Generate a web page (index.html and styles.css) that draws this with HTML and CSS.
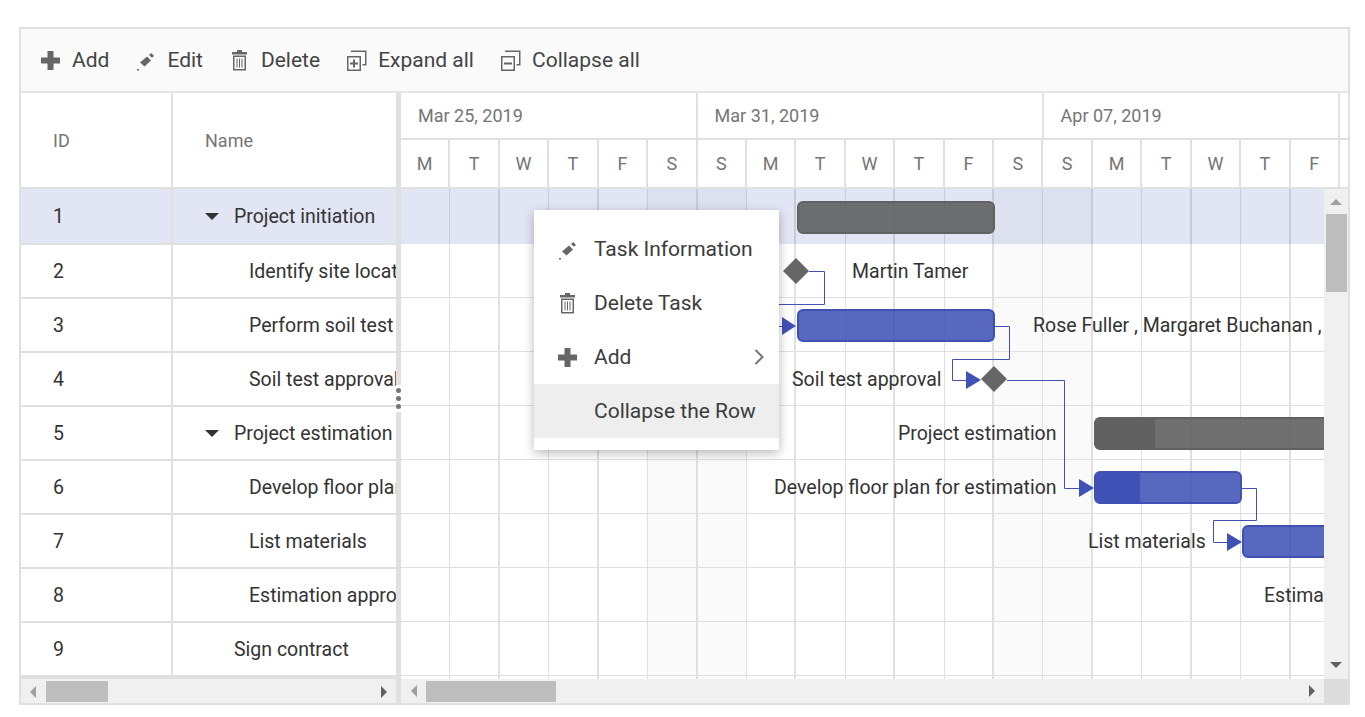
FILE: index.html
```html
<!DOCTYPE html>
<html>
  <head>
    <title>Project Gantt</title>
    <link rel="stylesheet" href="styles.css">
  </head>
  <body>
    <svg class="defs" xmlns="http://www.w3.org/2000/svg">
      <symbol id="ico-add" viewBox="0 0 21 21">
        <path d="M7.5 1h6v6.5H20v6h-6.500v6.500h-6v-6.500H1v-6h6.500z"/>
      </symbol>
      <symbol id="ico-edit" viewBox="0 0 21 21">
        <path d="M5 12.500 12 6.500l4 4-6.500 6zM14 5l2.200-2 2.800 3-2 1.800zM2 19h2v1.500H2z"/>
      </symbol>
      <symbol id="ico-delete" viewBox="0 0 21 21">
        <path d="M8 0h5v2h5v2.500H3V2h5z"/>
        <path d="M4 5.500h13V20.500H4zM5.500 7v12h10V7z" fill-rule="evenodd"/>
        <path d="M7.500 8.500h1V17.500h-1zM10 8.500h1V17.500h-1zM12.500 8.500h1V17.500h-1z"/>
      </symbol>
      <symbol id="ico-expand" viewBox="0 0 21 21">
        <path d="M1 6h14v15H1zM2.500 7.500v12h11v-12z" fill-rule="evenodd"/>
        <path d="M5 2V.5h15.500V15.500H16.500V14h2.500V2z"/>
        <path d="M7 9.500h2v3h3v2H9v3H7v-3H4v-2h3z"/>
      </symbol>
      <symbol id="ico-collapse" viewBox="0 0 21 21">
        <path d="M1 6h14v15H1zM2.500 7.500v12h11v-12z" fill-rule="evenodd"/>
        <path d="M5 2V.5h15.500V15.500H16.500V14h2.500V2z"/>
        <path d="M4 12.500h8v2H4z"/>
      </symbol>
    </svg>

    <main class="gantt">
      <header class="toolbar">
        <span class="tool"><svg class="ico"><use href="#ico-add"/></svg>Add</span>
        <span class="tool"><svg class="ico"><use href="#ico-edit"/></svg>Edit</span>
        <span class="tool"><svg class="ico"><use href="#ico-delete"/></svg>Delete</span>
        <span class="tool"><svg class="ico"><use href="#ico-expand"/></svg>Expand all</span>
        <span class="tool"><svg class="ico"><use href="#ico-collapse"/></svg>Collapse all</span>
      </header>

      <div class="panes">
        <section class="left">
          <div class="grid-head">
            <div class="col-id">ID</div>
            <div class="col-name">Name</div>
          </div>
          <div class="grid-row selected">
            <div class="cell-id">1</div>
            <div class="cell-name parent"><i class="caret"></i>Project initiation</div>
          </div>
          <div class="grid-row">
            <div class="cell-id">2</div>
            <div class="cell-name child">Identify site location</div>
          </div>
          <div class="grid-row">
            <div class="cell-id">3</div>
            <div class="cell-name child">Perform soil test</div>
          </div>
          <div class="grid-row">
            <div class="cell-id">4</div>
            <div class="cell-name child">Soil test approval</div>
          </div>
          <div class="grid-row">
            <div class="cell-id">5</div>
            <div class="cell-name parent"><i class="caret"></i>Project estimation</div>
          </div>
          <div class="grid-row">
            <div class="cell-id">6</div>
            <div class="cell-name child">Develop floor plan for estimation</div>
          </div>
          <div class="grid-row">
            <div class="cell-id">7</div>
            <div class="cell-name child">List materials</div>
          </div>
          <div class="grid-row">
            <div class="cell-id">8</div>
            <div class="cell-name child">Estimation approval</div>
          </div>
          <div class="grid-row">
            <div class="cell-id">9</div>
            <div class="cell-name leaf">Sign contract</div>
          </div>
          <div class="hscroll hscroll-left">
            <i class="arrow-left"></i>
            <b class="thumb-left"></b>
            <i class="arrow-right"></i>
          </div>
        </section>

        <div class="splitter"></div>

        <section class="right">
          <div class="tl-head">
            <div class="tier-top">
              <div class="week w6">Mar 25, 2019</div>
              <div class="week w7">Mar 31, 2019</div>
              <div class="week w6">Apr 07, 2019</div>
            </div>
            <div class="tier-days">
              <div>M</div><div>T</div><div>W</div><div>T</div><div>F</div><div>S</div>
              <div>S</div><div>M</div><div>T</div><div>W</div><div>T</div><div>F</div><div>S</div>
              <div>S</div><div>M</div><div>T</div><div>W</div><div>T</div><div>F</div><div></div>
            </div>
          </div>

          <div class="tl-body">
            <div class="chart">
              <div class="days">
                <i></i><i></i><i></i><i></i><i></i><i class="off"></i>
                <i class="off"></i><i></i><i></i><i></i><i></i><i></i><i class="off"></i>
                <i class="off"></i><i></i><i></i><i></i><i></i><i></i>
              </div>
              <div class="chart-rows">
                <div class="chart-row selected"></div>
                <div class="chart-row"></div><div class="chart-row"></div><div class="chart-row"></div>
                <div class="chart-row"></div><div class="chart-row"></div><div class="chart-row"></div>
                <div class="chart-row"></div><div class="chart-row"></div>
              </div>

              <svg class="links" width="923" height="490">
                <path d="M408 82.500H423.500V115.500H368V137.500H381"/>
                <path d="M594 137.500H608.500V170.500H551.500V191.500H565"/>
                <path d="M606 191.500H663.500V299.500H678"/>
                <path d="M841 299.500H855.500V331.500H812.500V353.500H826"/>
                <polygon class="head" points="381,128 395,137 381,146"/>
                <polygon class="head" points="565,182 580,191 565,200"/>
                <polygon class="head" points="678,290 693,299 678,308"/>
                <polygon class="head" points="826,344 841,353 826,362"/>
                <polygon class="mile" points="395,69 408,82 395,95"/>
                <polygon class="mile" points="395,69 382,82 395,95"/>
                <polygon class="mile" points="593,177 606,190 593,203"/>
                <polygon class="mile" points="593,177 580,190 593,203"/>
              </svg>

              <div class="bar gray b1"></div>
              <div class="bar blue b3"></div>
              <div class="bar gray b5"><div class="prog p5"></div></div>
              <div class="bar blue b6"><div class="prog p6"></div></div>
              <div class="bar blue b7"></div>

              <span class="label l2">Martin Tamer</span>
              <span class="label l3">Rose Fuller , Margaret Buchanan , Van Jack</span>
              <span class="label l4">Soil test approval</span>
              <span class="label l5">Project estimation</span>
              <span class="label l6">Develop floor plan for estimation</span>
              <span class="label l7">List materials</span>
              <span class="label l8">Estimation approval</span>
            </div>
            <div class="vscroll">
              <i class="arrow-up"></i>
              <b class="thumb-v"></b>
              <i class="arrow-down"></i>
            </div>
          </div>

          <div class="tl-foot">
            <div class="hscroll hscroll-right">
              <i class="arrow-left"></i>
              <b class="thumb-right"></b>
              <i class="arrow-right"></i>
            </div>
            <div class="corner"></div>
          </div>
        </section>
      </div>

      <div class="resize-handle"><i></i><i></i><i></i></div>

      <ul class="menu">
        <li><svg class="ico"><use href="#ico-edit"/></svg>Task Information</li>
        <li><svg class="ico"><use href="#ico-delete"/></svg>Delete Task</li>
        <li><svg class="ico"><use href="#ico-add"/></svg>Add
          <svg class="chevron" width="11" height="16" viewBox="0 0 11 16"><path d="M1.500 1 8.500 8l-7 7"/></svg>
        </li>
        <li class="hover"><span class="ico"></span>Collapse the Row</li>
      </ul>
    </main>
  </body>
</html>
```

FILE: styles.css
```css
*
{
  box-sizing: border-box;
}

body
{
  margin: 27px 15px 0 19px;
  font-family: Roboto, "Liberation Sans", sans-serif;
  color: #333;
  background: #FFF;
}

.defs
{
  display: none;
}

.gantt
{
  position: relative;
  width: 1331px;
  height: 678px;
  border: 2px solid #E0E0E0;
  overflow: hidden;
}

/* toolbar */

.toolbar
{
  display: flex;
  align-items: center;
  gap: 26px;
  height: 64px;
  padding-left: 19px;
  background: #FAFAFA;
  border-bottom: 2px solid #E6E6E6;
  font-size: 21px;
  color: #444;
}

.tool
{
  display: flex;
  align-items: center;
  gap: 11px;
}

.ico
{
  display: block;
  flex: none;
  width: 21px;
  height: 21px;
  fill: #666;
}

/* left grid */

.panes
{
  display: flex;
  height: 610px;
}

.left
{
  width: 375px;
  flex: none;
}

.splitter
{
  width: 5px;
  flex: none;
  background: #E0E0E0;
}

.grid-head
{
  display: grid;
  grid-template-columns: 152px 1fr;
  height: 96px;
  border-bottom: 2px solid #E0E0E0;
  font-size: 18px;
  color: #757575;
}

.col-id
{
  display: flex;
  align-items: center;
  padding-left: 32px;
  border-right: 2px solid #E0E0E0;
}

.col-name
{
  display: flex;
  align-items: center;
  padding-left: 32px;
}

.grid-row
{
  display: grid;
  grid-template-columns: 152px 1fr;
  height: 54px;
  border-bottom: 2px solid #E0E0E0;
  font-size: 19.500px;
}

.grid-row.selected
{
  height: 56px;
  background: rgba(63, 81, 181, .15);
}

.cell-id
{
  display: flex;
  align-items: center;
  padding-left: 32px;
  border-right: 2px solid #E0E0E0;
}

.cell-name
{
  display: flex;
  align-items: center;
  white-space: nowrap;
  overflow: hidden;
}

.parent { padding-left: 32px; }
.child  { padding-left: 76px; }
.leaf   { padding-left: 61px; }

.caret
{
  width: 0;
  height: 0;
  margin-right: 15px;
  border-left: 7px solid transparent;
  border-right: 7px solid transparent;
  border-top: 7px solid #333;
}

/* timeline header */

.right
{
  flex: 1;
  min-width: 0;
}

.tl-head
{
  height: 96px;
  overflow: hidden;
  color: #757575;
  font-size: 18px;
  border-bottom: 2px solid #E0E0E0;
}

.tier-top
{
  display: flex;
  height: 47px;
  border-bottom: 2px solid #E0E0E0;
}

.week
{
  flex: none;
  display: flex;
  align-items: center;
  padding-left: 17px;
  border-right: 2px solid #E0E0E0;
}

.w6 { width: 296.600px; }
.w7 { width: 346px; }

.tier-days
{
  display: grid;
  grid-template-columns: repeat(20, 49.430px);
  height: 47px;
}

.tier-days div
{
  display: flex;
  align-items: center;
  justify-content: center;
  border-right: 2px solid #E0E0E0;
}

/* chart */

.tl-body
{
  display: flex;
  height: 490px;
}

.chart
{
  position: relative;
  width: 923px;
  flex: none;
  overflow: hidden;
}

.days
{
  position: absolute;
  inset: 0;
  display: grid;
  grid-template-columns: repeat(19, 49.430px);
}

.days i
{
  border-right: 1px solid #E0E0E0;
}

.days i:nth-child(even)
{
  border-right-width: 2px;
}

.days .off
{
  background: #FAFAFA;
}

.chart-rows
{
  position: relative;
}

.chart-row
{
  height: 54px;
  border-bottom: 1px solid #E0E0E0;
}

.chart-row.selected
{
  height: 55px;
  border-bottom: 0;
  background: rgba(63, 81, 181, .15);
}

.links
{
  position: absolute;
  left: 0;
  top: 0;
  fill: none;
  stroke: #3F51B5;
}

.links .head
{
  fill: #3F51B5;
  stroke: none;
}

.links .mile
{
  fill: #666;
  stroke: none;
}

.bar
{
  position: absolute;
  height: 33px;
  border-radius: 6px;
  border: 2px solid;
  overflow: hidden;
}

.gray
{
  background: rgba(97, 97, 97, .9);
  border-color: #616161;
}

.blue
{
  background: rgba(63, 81, 181, .87);
  border-color: #3F51B5;
}

.prog
{
  height: 100%;
}

.gray .prog { background: #616161; }
.blue .prog { background: #3F51B5; }

.b1 { left: 396px; top: 12px;  width: 198px; }
.b3 { left: 396px; top: 120px; width: 198px; }
.b5 { left: 693px; top: 228px; width: 300px; }
.b6 { left: 693px; top: 282px; width: 148px; }
.b7 { left: 841px; top: 336px; width: 200px; }

.p5 { width: 59px; }
.p6 { width: 44px; }

.label
{
  position: absolute;
  font-size: 19.500px;
  line-height: 26px;
  white-space: nowrap;
}

.l2 { left: 451px; top: 70px; }
.l3 { left: 632px; top: 124px; }
.l4 { left: 391px; top: 178px; }
.l5 { left: 497px; top: 232px; }
.l6 { left: 373px; top: 286px; }
.l7 { left: 687px; top: 340px; }
.l8 { left: 863px; top: 394px; }

/* scrollbars */

.hscroll
{
  display: flex;
  align-items: center;
  height: 26px;
  background: #F0F0F0;
}

.hscroll-left
{
  border-top: 2px solid #E0E0E0;
  padding: 1px 0 0 9px;
}

.hscroll-right
{
  flex: 1;
  height: 24px;
  padding: 0 0 0 10px;
}

.arrow-left
{
  width: 0;
  height: 0;
  border-top: 6px solid transparent;
  border-bottom: 6px solid transparent;
  border-right: 6px solid #9E9E9E;
}

.arrow-right
{
  width: 0;
  height: 0;
  margin: 0 9px 0 auto;
  border-top: 6px solid transparent;
  border-bottom: 6px solid transparent;
  border-left: 6px solid #616161;
}

.thumb-left
{
  width: 62px;
  height: 21px;
  margin-left: 10px;
  background: #BDBDBD;
}

.thumb-right
{
  width: 130px;
  height: 21px;
  margin-left: 9px;
  background: #BDBDBD;
}

.vscroll
{
  flex: 1;
  display: flex;
  flex-direction: column;
  align-items: center;
  background: #F0F0F0;
}

.arrow-up
{
  width: 0;
  height: 0;
  margin-top: 10px;
  border-left: 6px solid transparent;
  border-right: 6px solid transparent;
  border-bottom: 6px solid #9E9E9E;
}

.arrow-down
{
  width: 0;
  height: 0;
  margin: auto 0 11px;
  border-left: 6px solid transparent;
  border-right: 6px solid transparent;
  border-top: 6px solid #616161;
}

.thumb-v
{
  width: 21px;
  height: 78px;
  margin-top: 9px;
  background: #BDBDBD;
}

.tl-foot
{
  display: flex;
  height: 24px;
}

.corner
{
  width: 24px;
  flex: none;
  background: #DCDCDC;
}

/* overlays */

.resize-handle
{
  position: absolute;
  left: 375px;
  top: 356px;
  display: flex;
  flex-direction: column;
  align-items: center;
  justify-content: center;
  gap: 3px;
  width: 5px;
  height: 27px;
  background: #FFF;
}

.resize-handle i
{
  flex: none;
  width: 5px;
  height: 5px;
  border-radius: 50%;
  background: #757575;
}

.menu
{
  position: absolute;
  left: 513px;
  top: 181px;
  width: 245px;
  height: 240px;
  margin: 0;
  padding: 12px 0;
  list-style: none;
  background: #FFF;
  box-shadow: 0 3px 10px rgba(0, 0, 0, .28);
  font-size: 21px;
  color: #3C3C3C;
}

.menu li
{
  display: flex;
  align-items: center;
  gap: 16px;
  height: 54px;
  padding-left: 23px;
}

.menu .hover
{
  background: #EEE;
}

.chevron
{
  margin-left: auto;
  margin-right: 14px;
  fill: none;
  stroke: #757575;
  stroke-width: 2;
}
```
